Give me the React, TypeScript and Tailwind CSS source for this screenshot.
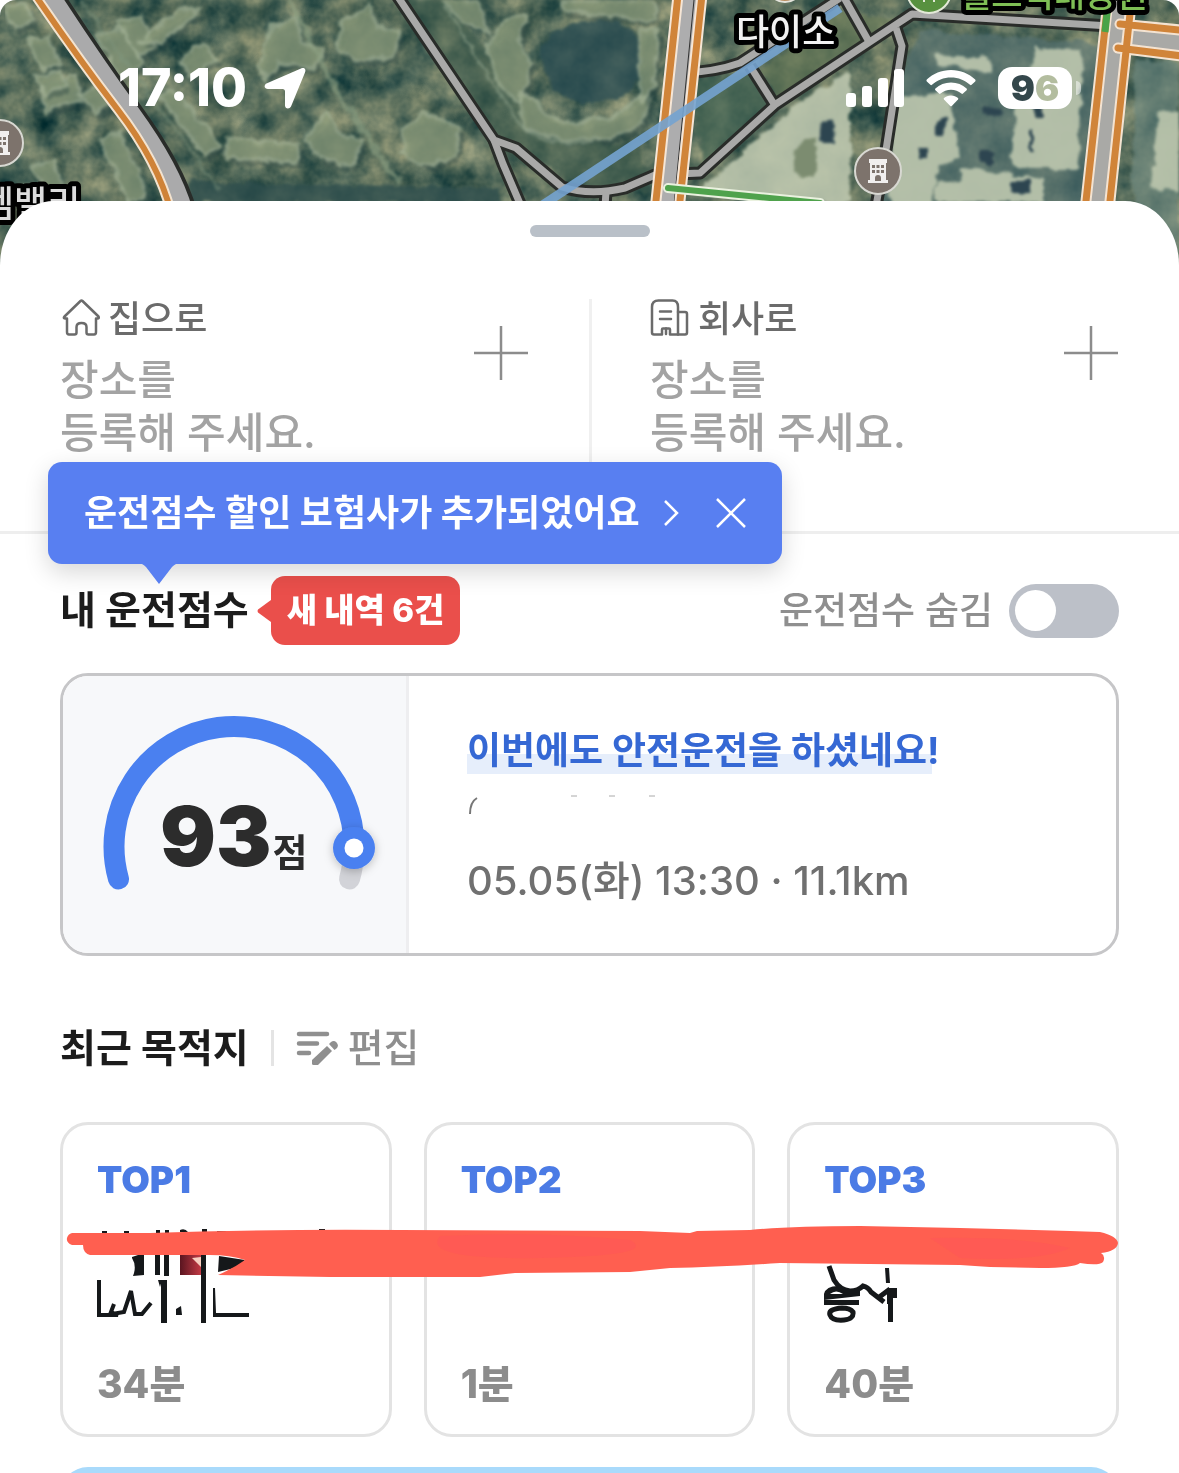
import { useState } from 'react';
import { clsx } from 'clsx';

const destinations = [
  { rank: 'TOP1', minutes: '34분' },
  { rank: 'TOP2', minutes: '1분' },
  { rank: 'TOP3', minutes: '40분' },
];

const lightBlocks = [
  'M95 35l28-8 20 38-22 14z',
  'M40 88l36-14 4 26-34 12z',
  'M5 5l22-3 6 20-18 6z',
  'M100 140l20-8 28 62-18 10-16-34z',
  'M30 165l24-4 12 30-18 8z',
  'M80 95l26-14 12 20-22 12z',
  'M118 22l22-6 14 32-16 8z',
  'M140 40l40-30 18 0-38 34z',
  'M180 60l22-16 16 14-26 20z',
  'M28 40l20-4 12 28-18 6z',
  'M36 76l24-4 6 14-22 8z',
  'M272 25l24-8 6 26 22 4-12 22-32-6-14 16-8-12z',
  'M340 22l30-16 8 22 22 4-8 26-38 2-16-10z',
  'M226 138l72 6-2 18-70-4z',
  'M304 140l22-28 14 22 22 6-10 26-32-8z',
  'M160 96l14-6 46 54-14 12z',
  'M404 128l20-16 36 16-6 30-34 8-18-14z',
  'M486 46l20-26 20-6-8 30 14 20-12 40-20-18z',
  'M520 92l16 8 12 18 26 6 40-8 26-20 10 2-8 26-30 14-50 2-38-12z',
  'M562 0l90 0 4 20-50-4-40-6z',
  'M640 30l18 0-4 56-14 16z',
  'M440 0l36 0 12 34-26-14z',
];

const roofs = [
  'M892 96l60-2 6 66-20 6-6 40-42 0z',
  'M1014 108l22-60 46 2-4 120-66 0z',
  'M936 182l26-2 0-12 82 10 0 24-108 0z',
  'M936 54l54 4 2 14-54-6z',
  'M1158 110l21 2 0 80-28-4z',
  'M700 190l100-88 50-30 0 130-50 0-96-6z',
];

const minorRoads = [
  'M396 -6L494 140L516 148L562 187Q590 196 625 188L655 175L700 173L776 104L912 14L1110 26',
  'M494 140L503 164L521 206',
  'M682 73Q715 72 740 63L840 -2',
  'M750 66L774 104',
  'M842 -6L868 40',
  'M896 28L902 46L886 150L876 206',
  'M606 192L605 206',
];

const Building = ({ x, y }: { x: number; y: number }) => (
  <g transform={`translate(${x} ${y})`}>
    <circle r="23" fill="#7d736c" stroke="#d8d8d2" strokeWidth="2" />
    <path d="M-9 -12h18v4h-1v17h2v3h-20v-3h2v-17h-1z" fill="#f1efee" />
    <path
      d="M-6 -6h3v3h-3zM-1.500 -6h3v3h-3zM3 -6h3v3h-3zM-6 -1h3v3h-3zM-1.500 -1h3v3h-3zM3 -1h3v3h-3zM-3 10v-3a3 3 0 0 1 6 0v3z"
      fill="#7d736c"
    />
  </g>
);

const SatelliteMap = () => (
  <svg
    className="absolute inset-x-0 top-0 h-[300px] w-full rounded-t-2xl"
    viewBox="0 0 1179 300"
    preserveAspectRatio="xMidYMin slice"
    aria-hidden="true"
  >
    <defs>
      <filter id="terrain" x="0" y="0" width="100%" height="100%" colorInterpolationFilters="sRGB">
        <feTurbulence type="fractalNoise" baseFrequency="0.03" numOctaves="4" seed="8" />
        <feColorMatrix values="0.8 0.1 0 0 -0.100  0.6 0.1 0 0 0.080  0.4 0.1 0 0 0.110  0 0 0 0 1" />
      </filter>
      <filter id="soft" x="0" y="0" width="100%" height="100%" colorInterpolationFilters="sRGB">
        <feTurbulence type="fractalNoise" baseFrequency="0.08" numOctaves="3" seed="3" />
        <feDisplacementMap in="SourceGraphic" xChannelSelector="R" yChannelSelector="G" scale="10" />
        <feGaussianBlur stdDeviation="1.500" />
      </filter>
    </defs>
    <rect width="1179" height="300" filter="url(#terrain)" />
    <g filter="url(#soft)">
      <path d="M400 0L450 0L545 135L640 150L650 190L590 190L500 140Z" fill="#3f5c4d" opacity="0.6" />
      <path d="M190 182l310 6 0 16-310-2z" fill="#2f4f4d" opacity="0.8" />
      <path d="M540 50q20-34 60-30 50 2 40 54-14 34-62 28-38-10-38-52z" fill="#2c4e52" opacity="0.8" />
      <path d="M690 80l60-8 20 34-66 60z" fill="#3d6050" opacity="0.7" />
      <path d="M760 70l80-60 60 10-120 84z" fill="#6a7b58" opacity="0.7" />
      <path d="M920 30l200 14-24 160-220 0 16-110z" fill="#587372" opacity="0.7" />
      <path d="M1136 60l43 2 0 220-48-90z" fill="#6a857c" opacity="0.7" />
      {lightBlocks.map((d) => (
        <g key={d}>
          <path d={d} fill="#233f3e" opacity="0.4" transform="translate(5 6)" />
          <path d={d} fill="#8b9b7b" stroke="#a3b296" strokeWidth="3" opacity="0.75" />
        </g>
      ))}
      {roofs.map((d) => (
        <path key={d} d={d} fill="#bcc6ae" opacity="0.9" />
      ))}
      <path
        d="M820 122l12-4 2 24-16 0zM918 148l10 0 0 10-10 0zM936 120l10 0 0 16-10 0zM980 150l16 0 0 14-16 0zM1034 106l10 0 0 10-10 0zM1010 180l20 0 0 12-20 0zM1030 130l4 0 0 20-4 0zM984 106l18 2-2 8-16-2z"
        fill="#2d4550"
      />
      <path d="M794 148l22-10 0 40-24-4z" fill="#7c8c70" />
      <path d="M290 0L330 80L390 170L400 182" fill="none" stroke="#90a386" strokeWidth="5" opacity="0.6" />
      <path d="M440 0L520 125Q550 150 600 140" fill="none" stroke="#8fa28a" strokeWidth="3" opacity="0.6" />
      <path d="M80 0L220 190" fill="none" stroke="#7f967e" strokeWidth="3" opacity="0.5" />
    </g>

    <g fill="none" strokeLinejoin="round">
      {minorRoads.map((d) => (
        <path key={d} d={d} stroke="#292c29" strokeWidth="13" />
      ))}
      {minorRoads.map((d) => (
        <path key={d} d={d} stroke="#a9a9a8" strokeWidth="7" />
      ))}

      <path d="M46 -8Q90 60 130 115T182 212" stroke="#292c29" strokeWidth="24" transform="translate(3 0)" />
      <path d="M46 -8Q90 60 130 115T182 212" stroke="#aaaaab" strokeWidth="22" />
      <path d="M33 -8Q78 58 118 110T171 212" stroke="#f3e3cf" strokeWidth="10" />
      <path d="M33 -8Q78 58 118 110T171 212" stroke="#cf8338" strokeWidth="6" />

      <path d="M690 -5L667 210" stroke="#adadae" strokeWidth="28" />
      <path d="M694 0L674 205" stroke="#303030" strokeWidth="1" />
      <path d="M678 -5L655 210M702 -5L679 210" stroke="#f6e6d6" strokeWidth="11" />
      <path d="M678 -5L655 210M702 -5L679 210" stroke="#d08439" strokeWidth="7" />
      <path d="M1120 -5L1096 210M1112 35L1190 46" stroke="#a9a9a6" strokeWidth="26" />
      <path
        d="M1107 10L1085 210M1132 -5L1109 210M1120 24L1190 31M1118 48L1190 57"
        stroke="#f4e3d1"
        strokeWidth="11"
        strokeLinecap="round"
      />
      <path
        d="M1107 10L1085 210M1132 -5L1109 210M1120 24L1190 31M1118 48L1190 57"
        stroke="#d08439"
        strokeWidth="7"
        strokeLinecap="round"
      />
      <path d="M1109 -5L1105 32" stroke="#4aa348" strokeWidth="7" />

      <path d="M535 210L840 8" stroke="#74a3d0" strokeWidth="9" opacity="0.9" />
      <path d="M668 188L820 203" stroke="#eaf1df" strokeWidth="10" strokeLinecap="round" />
      <path d="M668 188L820 203" stroke="#4fa24c" strokeWidth="6" strokeLinecap="round" />
    </g>

    <Building x={878} y={171} />
    <Building x={0} y={143} />
    <circle cx="929" cy="-9" r="22" fill="#58913f" stroke="#e4ead8" strokeWidth="2" />
    <path d="M924 -2v4M934 -2v4" stroke="#e4ead8" strokeWidth="2" />
    <circle cx="785" cy="-16" r="18" fill="#b98c5f" stroke="#e4e4dc" strokeWidth="2" />

    <g
      className="font-['Noto_Sans_CJK_KR',sans-serif] font-medium"
      stroke="#000"
      strokeWidth="10"
      strokeLinejoin="round"
      paintOrder="stroke"
      fontSize="36"
    >
      <text x="736" y="45" fill="#f2f2f2">다이소</text>
      <text x="-19" y="217" fill="#dcdcdc">엠밸리</text>
      <text x="960" y="7" fontSize="34" fill="#7fbf55">월드럭대공원</text>
    </g>
  </svg>
);

const StatusBar = () => (
  <div className="relative flex items-center justify-between pt-[60px] pr-[98px] pl-[118px] text-white">
    <div className="flex items-center gap-4">
      <span className="text-[52px] leading-[56px] font-extrabold">17:10</span>
      <svg className="h-11 w-11" viewBox="0 0 44 44" fill="currentColor" aria-hidden="true">
        <path d="M38 2.500C41 1 43.500 3 42 6.500L28 40.500C26.500 43.500 22 43 22 39.500V25.500Q22 23 19.500 23H5C1 23 .5 18.500 4 17.200Z" />
      </svg>
    </div>
    <div className="flex items-center gap-[22px]">
      <svg className="h-10 w-[58px]" viewBox="0 0 58 40" fill="currentColor" aria-hidden="true">
        <rect y="25" width="10" height="14" rx="3" />
        <rect x="16" y="18" width="10" height="21" rx="3" />
        <rect x="32" y="10" width="10" height="29" rx="3" />
        <rect x="48" y="1" width="10" height="38" rx="3" />
      </svg>
      <svg className="h-10 w-[50px]" viewBox="0 0 50 40" fill="currentColor" aria-hidden="true">
        <path d="M25 2C34.500 2 43 5.600 49.200 11.600Q50 12.500 49.200 13.400L45.600 16.800Q44.800 17.500 44 16.800C39 12 32.300 9.400 25 9.400S11 12 6 16.800Q5.200 17.500 4.400 16.800L.8 13.400Q0 12.500.8 11.600C7 5.600 15.500 2 25 2Z" />
        <path d="M25 14.500C31 14.500 36.500 16.700 40.600 20.500Q41.400 21.300 40.600 22.200L37 25.600Q36.200 26.300 35.400 25.600C32.600 23.200 29 21.800 25 21.800S17.400 23.200 14.600 25.600Q13.800 26.300 13 25.600L9.400 22.200Q8.600 21.300 9.400 20.500C13.500 16.700 19 14.500 25 14.500Z" />
        <path d="M25 27.500C28 27.500 30 28.400 32 30Q32.700 30.800 32 31.600L26 37.800Q25 38.800 24 37.800L18 31.600Q17.300 30.800 18 30C20 28.400 22 27.500 25 27.500Z" />
      </svg>
      <div className="flex items-center gap-1">
        <span className="flex h-[42px] w-[74px] items-center justify-center rounded-[14px] bg-white">
          <span className="bg-linear-to-r from-[#34474b] from-45% to-[#b3bd9f] to-55% bg-clip-text text-[36px] leading-[42px] font-black text-transparent">
            96
          </span>
        </span>
        <span className="h-[14px] w-[5px] rounded-r-full bg-white/50" />
      </div>
    </div>
  </div>
);

const HomeIcon = () => (
  <svg
    className="h-10 w-10"
    viewBox="0 0 40 40"
    fill="none"
    stroke="currentColor"
    strokeWidth="2.500"
    strokeLinejoin="round"
    strokeLinecap="round"
    aria-hidden="true"
  >
    <path d="M20.500 2Q21.500 1 22.500 2L38.500 17.500Q39.500 19.500 37.500 19.500H36V33Q36 35.500 34 35.500H28.500Q26.500 35.500 26.500 33.500V28Q26.500 24 21.500 24T16.500 28V33.500Q16.500 35.500 14.500 35.500H9Q7 35.500 7 33V19.500H5Q3 19.500 4.500 17.500Z" />
  </svg>
);

const OfficeIcon = () => (
  <svg
    className="h-10 w-10"
    viewBox="0 0 40 40"
    fill="none"
    stroke="currentColor"
    strokeWidth="2.500"
    strokeLinejoin="round"
    strokeLinecap="round"
    aria-hidden="true"
  >
    <path d="M2 8Q2 1.500 8.500 1.500H22.500Q28 1.500 28 8V35.500H20V30.500Q20 29.500 19 29.500H13Q12 29.500 12 30.500V35.500H4Q2 35.500 2 33.500Z" />
    <path d="M28 13H35Q37 13 37 15V33.500Q37 35.500 35 35.500H28" />
    <path d="M10 12.500H21M10 20H21M16 29.500V35" />
  </svg>
);

const Shortcut = ({ icon, label }: { icon: React.ReactNode; label: string }) => (
  <button type="button" className="flex flex-1 items-start justify-between pr-[60px] pb-[72px] pl-[58px] text-left">
    <span className="flex flex-col gap-[14px]">
      <span className="flex items-center gap-2 text-[36px] leading-[40px] font-medium text-[#6b6b6b]">
        {icon}
        {label}
      </span>
      <span className="text-[42px] leading-[53px] font-medium text-[#a3a3a3]">
        장소를
        <br />
        등록해 주세요.
      </span>
    </span>
    <svg
      className="mt-[26px] h-[56px] w-[56px]"
      viewBox="0 0 56 56"
      stroke="#8c8c8c"
      strokeWidth="2.500"
      aria-hidden="true"
    >
      <path d="M28 1V55M1 28H55" />
    </svg>
  </button>
);

const NoticeTooltip = ({ onClose }: { onClose: () => void }) => (
  <div className="absolute top-[-72px] left-12 flex h-[102px] items-center gap-9 rounded-[14px] bg-[#587ff1] px-9 text-white shadow-[0_8px_24px_rgba(0,0,0,0.16)]">
    <a href="#insurance" className="flex items-center gap-[22px] text-[36px] font-bold whitespace-nowrap">
      운전점수 할인 보험사가 추가되었어요
      <svg
        className="h-7 w-[18px]"
        viewBox="0 0 18 28"
        fill="none"
        stroke="currentColor"
        strokeWidth="2.500"
        aria-hidden="true"
      >
        <path d="M3 2L15 14L3 26" />
      </svg>
    </a>
    <button type="button" onClick={onClose} aria-label="닫기">
      <svg
        className="h-[30px] w-[30px]"
        viewBox="0 0 30 30"
        stroke="currentColor"
        strokeWidth="2.500"
        aria-hidden="true"
      >
        <path d="M1 1L29 29M29 1L1 29" />
      </svg>
    </button>
    <svg className="absolute top-full left-[94px] h-5 w-[34px]" viewBox="0 0 34 20" fill="#587ff1" aria-hidden="true">
      <path d="M0 0H34Q32 1 30 3L17 20L4 3Q2 1 0 0Z" />
    </svg>
  </div>
);

const ScoreGauge = () => (
  <div className="relative h-[277px] w-[346px] shrink-0 border-r-3 border-[#eeeef0] bg-[#f7f8fa]">
    <svg className="h-full w-full" viewBox="0 0 343 277" fill="none" strokeLinecap="round" aria-hidden="true">
      <defs>
        <filter id="knob-shadow" x="-50%" y="-50%" width="200%" height="200%">
          <feDropShadow dx="0" dy="2" stdDeviation="5" floodOpacity="0.25" />
        </filter>
      </defs>
      <path d="M291 172A120 120 0 0 1 286.500 203" stroke="#d2d3d8" strokeWidth="21" />
      <path d="M55.500 203A120 120 0 1 1 291 172" stroke="#4a80f0" strokeWidth="21" />
      <circle cx="291" cy="172" r="21" fill="#4a80f0" filter="url(#knob-shadow)" />
      <circle cx="291" cy="172" r="9.500" fill="#fff" />
    </svg>
    <p className="absolute top-[110px] left-[97px] flex items-baseline gap-px text-[#2c2c2c]">
      <span className="text-[83px] leading-[100px] font-black">93</span>
      <span className="text-[38px] leading-[50px] font-bold">점</span>
    </p>
  </div>
);

// red marker stroke across the cards, with the ends of the covered names below it
const Scribble = () => (
  <svg
    className="pointer-events-none absolute inset-x-0 top-[98px] h-[110px] w-full"
    viewBox="60 1220 1059 110"
    preserveAspectRatio="none"
    aria-hidden="true"
  >
    <defs>
      <linearGradient id="bleed" x1="0" x2="1">
        <stop offset="0" stopColor="#5a1520" />
        <stop offset="1" stopColor="#c23a44" />
      </linearGradient>
    </defs>
    <path d="M180 1254h21v21h-21z" fill="url(#bleed)" />
    <path d="M192 1258l9-1v10z" fill="#f6cfc0" />
    <g fill="#15181a">
      <path d="M102 1231h5v4h-5zM124 1231h5v4h-5zM156 1230h4v5h-4zM165 1230h4v5h-4zM202 1229h5v6h-5zM217 1231h29v3h-29zM319 1229h6v4h-6z" />
      <path d="M180 1230q5-2 8 2h-8zM132 1257l12-4v22l-11 1q4-10-1-18zM155 1254h5v21h-5zM164 1254h5v22h-5zM201 1250h5v73h-5zM219 1256l26 4-6 7-21 5zM161 1280h6v43h-6zM158 1280l4 0-2 7zM176 1309l5-3 1 9h-6z" />
      <path d="M213 1288l2 0 1 25h33v4h-36z" />
      <path d="M824 1294q2-8 14-8 8 1 10 6l12-2v6l-36 4zM824 1300h35v5h-35zM885 1268l4 0 1 15h-4zM887 1288h10v10h-4v24h-5v-18h-1z" />
    </g>
    <path d="M830 1294q6-5 13 0z" fill="#fff" />
    <g fill="none" stroke="#15181a" strokeWidth="4">
      <path d="M99 1280V1315H118L111 1312L114 1304M112 1314L124 1312L131 1291L135 1314L142 1314L151 1303" />
      <path
        d="M829 1266L834 1280Q840 1290 850 1291Q858 1291 863 1286Q868 1287 871 1292L884 1302M878 1298L890 1289M842 1308Q828 1309 830 1315Q832 1321 844 1320Q854 1319 853 1312Q850 1308 842 1308Z"
        strokeWidth="5"
      />
    </g>
    <path
      d="M72 1233L150 1233Q260 1229 400 1230L640 1231L690 1233L697 1231L750 1230Q790 1226 860 1226L960 1228L1070 1231L1100 1232Q1117 1236 1118 1243Q1117 1251 1101 1253Q1106 1256 1103 1262Q1099 1266 1080 1263Q1074 1268 1040 1268L990 1267L960 1265L780 1263Q720 1267 670 1268L630 1272L515 1273L480 1277L330 1277L218 1275Q234 1268 245 1260Q230 1255 210 1255H90Q83 1253 83 1245H72Q66 1243 67 1238Q68 1234 72 1233Z"
      fill="#ff5f50"
    />
    <path
      d="M440 1236Q540 1231 630 1240Q660 1256 540 1258T440 1236ZM930 1238Q1020 1236 1070 1248Q1040 1262 960 1258Z"
      fill="#ff5658"
      opacity="0.5"
    />
  </svg>
);

export default function App() {
  const [showNotice, setShowNotice] = useState(true);
  const [hideScore, setHideScore] = useState(false);

  return (
    <main className="relative h-screen overflow-hidden bg-white font-[Inter,'Noto_Sans_CJK_KR',sans-serif]">
      <SatelliteMap />
      <StatusBar />

      <div className="relative mt-[85px] rounded-t-[54px_64px] bg-white pt-6">
        <div className="mx-auto h-3 w-[120px] rounded-full bg-[#b9c0c8]" />

        <div className="mt-[62px] flex divide-x-3 divide-[#f0f0f0] border-b-3 border-[#eeeeee] pl-[2px]">
          <Shortcut icon={<HomeIcon />} label="집으로" />
          <Shortcut icon={<OfficeIcon />} label="회사로" />
        </div>

        <section className="relative px-[60px] pt-[42px]">
          <div className="flex items-center justify-between">
            <div className="flex items-center gap-2">
              <h2 className="text-[39px] font-bold text-[#1c1c1c]">내 운전점수</h2>
              <div className="flex items-center">
                <svg className="h-6 w-[14px]" viewBox="0 0 14 24" fill="#ea4f4b" aria-hidden="true">
                  <path d="M14 1V23L1 13.500Q0 12 1 10.500Z" />
                </svg>
                <span className="flex h-[69px] items-center rounded-[14px] bg-[#ea4f4b] px-4 text-[33px] font-extrabold text-white">
                  새 내역 6건
                </span>
              </div>
            </div>
            <label className="flex items-center gap-4 text-[37px] font-medium text-[#8f8f8f]">
              운전점수 숨김
              <input
                type="checkbox"
                className="sr-only"
                checked={hideScore}
                onChange={(e) => setHideScore(e.target.checked)}
              />
              <span
                className={clsx(
                  'flex h-[54px] w-[110px] items-center rounded-full px-[6px]',
                  hideScore ? 'justify-end bg-[#4a80f0]' : 'bg-[#bcc0c8]',
                )}
              >
                <span className="size-[41px] rounded-full bg-white" />
              </span>
            </label>
          </div>
          {showNotice && <NoticeTooltip onClose={() => setShowNotice(false)} />}

          <div className="mt-7 flex overflow-hidden rounded-[28px] border-3 border-[#c6c6c8]">
            <ScoreGauge />
            <div className="flex flex-col items-start px-[58px] pt-[50px]">
              <p className="relative text-[37px] leading-[50px] font-bold text-[#3568d4]">
                <span className="absolute top-7 right-2 bottom-[2px] left-0 bg-[#e6eefb]" />
                <span className="relative">이번에도 안전운전을 하셨네요!</span>
              </p>
              <svg className="mt-4 h-7 w-[220px]" viewBox="0 0 220 28" fill="none" aria-hidden="true">
                <path d="M3 22Q3 10 10 6" stroke="#777" strokeWidth="2" />
                <path d="M104 4h6M142 4h6M182 4h6" stroke="#aaa" strokeWidth="1" />
              </svg>
              <p className="mt-9 text-[40px] leading-[50px] font-medium text-[#707070]">05.05(화) 13:30 · 11.1km</p>
            </div>
          </div>
        </section>

        <section className="px-[60px] pt-[68px]">
          <div className="flex h-12 items-center">
            <h2 className="text-[39px] font-bold text-[#1c1c1c]">최근 목적지</h2>
            <span className="mx-[22px] h-9 w-[3px] bg-[#e4e4e4]" />
            <button type="button" className="flex items-center gap-[10px] text-[39px] font-medium text-[#8f8f8f]">
              <svg
                className="h-9 w-[42px]"
                viewBox="0 0 42 36"
                fill="none"
                stroke="currentColor"
                strokeWidth="4.500"
                strokeLinecap="round"
                aria-hidden="true"
              >
                <path d="M3 4H31M3 13.500H21M3 23H13" />
                <path d="M16 30L31 16L36 21L22 35H17.500Q16 35 16 33.500Z" fill="currentColor" stroke="none" />
                <path d="M33 14L35 12Q38 10 40.500 12.500T41 18L38.500 20Z" fill="currentColor" stroke="none" />
              </svg>
              편집
            </button>
          </div>

          <div className="relative mt-[50px]">
            <ul className="grid grid-cols-3 gap-8">
              {destinations.map(({ rank, minutes }) => (
                <li
                  key={rank}
                  className="flex h-[315px] flex-col justify-between rounded-[28px] border-3 border-[#e3e3e3] px-[34px] pt-[35px] pb-[30px] leading-[40px]"
                >
                  <span className="text-[37px] font-black text-[#4b7be5]">{rank}</span>
                  <span className="text-[39px] font-extrabold text-[#8c8c8c]">{minutes}</span>
                </li>
              ))}
            </ul>
            <Scribble />
          </div>

          <div className="mt-[30px] h-24 rounded-[28px] bg-[#a9dafb]" />
        </section>
      </div>
    </main>
  );
}
